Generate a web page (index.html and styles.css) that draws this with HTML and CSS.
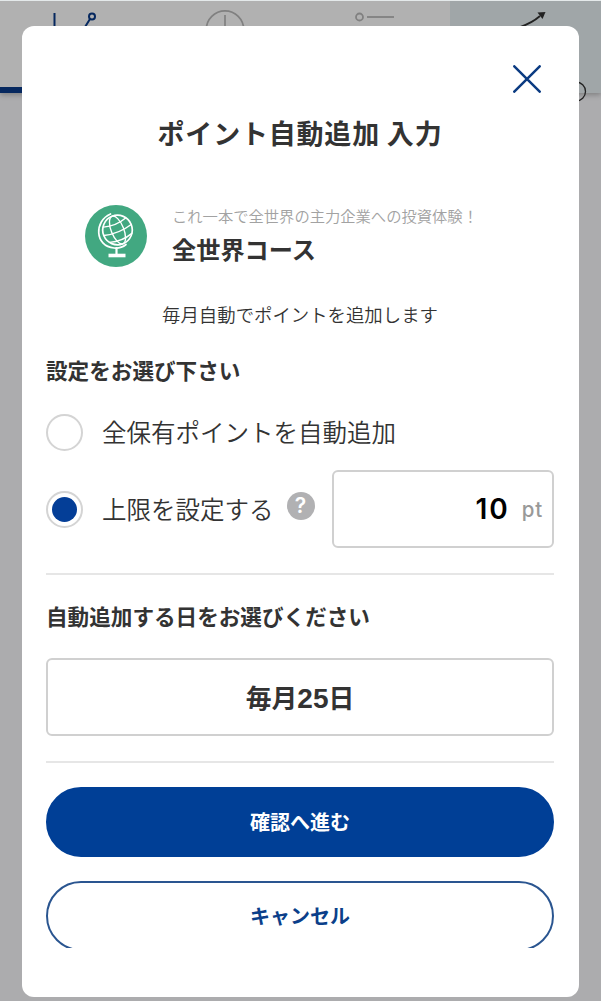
FILE: index.html
```html
<!DOCTYPE html>
<html lang="ja">
<head>
    <meta charset="UTF-8">
    <meta name="viewport" content="width=device-width, initial-scale=1.0">
    <title>ポイント自動追加 入力</title>
    <link rel="stylesheet" href="styles.css">
</head>
<body>
    <nav class="tabs">
        <div class="tab current">
            <svg class="tab-icon" viewBox="0 0 150 91" fill="none" stroke="#06285f" stroke-width="2">
                <path d="M54.5 12v30M85 26l5-8"/>
                <circle cx="92" cy="15.5" r="3"/>
            </svg>
        </div>
        <div class="tab">
            <svg class="tab-icon" viewBox="0 0 150 91" fill="none" stroke="#808080" stroke-width="1.7">
                <circle cx="75" cy="28.5" r="18.7"/>
                <path d="M75 14v16"/>
            </svg>
        </div>
        <div class="tab">
            <svg class="tab-icon" viewBox="0 0 150 91" fill="none" stroke="#808080" stroke-width="1.8">
                <circle cx="59.5" cy="16" r="3.5"/>
                <path d="M67 16h27"/>
            </svg>
        </div>
        <div class="tab active">
            <svg class="tab-icon" viewBox="0 0 150 91" fill="none" stroke="#222" stroke-width="1.8">
                <path d="M70 26q12-4 20-11"/>
                <path d="M87.500 11.500l8-.5-3 7z" fill="#222" stroke="none"/>
                <circle cx="126" cy="90.500" r="9.500" stroke-width="1.300"/>
            </svg>
        </div>
    </nav>

    <div class="modal">
        <div class="modal-scroll">
            <div class="close-row">
                <svg class="close" viewBox="0 0 28 28" stroke="#0b3b82" stroke-width="2.500" stroke-linecap="round">
                    <path d="M1.300 1.300l25.400 25.400M26.700 1.300L1.300 26.700"/>
                </svg>
            </div>
            <h1>ポイント自動追加 入力</h1>

            <div class="course">
                <svg class="course-icon" viewBox="0 0 62 62" fill="none" stroke="#fff" stroke-width="1.400" stroke-linecap="round">
                    <circle cx="31" cy="31" r="31" fill="#42a881" stroke="none"/>
                    <g transform="rotate(-22 32.500 25)">
                        <circle cx="32.500" cy="25" r="14.800" stroke-width="1.700"/>
                        <ellipse cx="32.500" cy="25" rx="6.300" ry="14.800"/>
                        <path d="M17.700 25q14.800 4 29.600 0M20.500 17q12 4 24 0M20.500 33.500q12 4 24 0"/>
                    </g>
                    <path d="M25.500 9C9 16 9.500 41 29 43Q36 43.700 41 39.500" stroke-width="1.700"/>
                    <path d="M31.500 43v6" stroke-width="2.200"/>
                    <path d="M23.500 50.500h17" stroke-width="3.600" stroke-linecap="butt"/>
                </svg>
                <div class="course-text">
                    <p class="caption">これ一本で全世界の主力企業への投資体験！</p>
                    <p class="course-name">全世界コース</p>
                </div>
            </div>
            <p class="note">毎月自動でポイントを追加します</p>

            <h2>設定をお選び下さい</h2>
            <div class="option all">
                <span class="radio"></span>
                <span class="label">全保有ポイントを自動追加</span>
            </div>
            <div class="option limit">
                <span class="radio checked"></span>
                <span class="label">上限を設定する</span>
                <span class="help">?</span>
                <div class="amount">
                    <span class="value">10</span>
                    <span class="unit">pt</span>
                </div>
            </div>

            <div class="divider"></div>
            <h2>自動追加する日をお選びください</h2>
            <div class="select">毎月<span class="day">25</span>日</div>
            <div class="divider"></div>

            <div class="btn primary">確認へ進む</div>
            <div class="btn secondary">キャンセル</div>
        </div>
    </div>
</body>
</html>
```

FILE: styles.css
```css
* {
    box-sizing: border-box;
}
body {
    margin: 0;
    height: 1001px;
    overflow: hidden;
    background: #acacae;
    color: #333;
    font-family: "Noto Sans CJK JP", sans-serif;
}
h1, h2, p {
    margin: 0;
}

/* tab bar behind the dialog */
.tabs {
    display: flex;
    height: 93px;
    border-top: 1px solid #e4e9ea;
    background: #b1b1b1;
    box-shadow: 0 2px 5px rgba(0, 0, 0, 0.25);
}
.tab {
    width: 150px;
}
.tab.current {
    border-bottom: 6px solid #06285f;
}
.tab.active {
    width: 151px;
    background: #a0a6a8;
}
.tab-icon {
    display: block;
    width: 150px;
    height: 91px;
    overflow: visible;
}

.modal {
    position: absolute;
    top: 26px;
    left: 22px;
    width: 557px;
    height: 971px;
    background: #fff;
    border-radius: 12px;
}
.modal-scroll {
    height: 922px;
    padding: 0 25px 0 24px;
    overflow: hidden;
}
.close-row {
    display: flex;
    justify-content: flex-end;
    padding: 39px 13px 0 0;
}
.close {
    width: 28px;
    height: 28px;
}
h1 {
    margin-top: 20px;
    font-size: 27px;
    font-weight: 700;
    line-height: 40px;
    letter-spacing: 0.8px;
    text-align: center;
}
h2 {
    margin-top: 27px;
    font-size: 21.6px;
    font-weight: 700;
    line-height: 30px;
}

.course {
    display: flex;
    gap: 25px;
    margin: 52px 0 0 39px;
    height: 62px;
}
.course-icon {
    width: 62px;
    height: 62px;
}
.caption {
    color: #a2a2a2;
    font-size: 15.3px;
    font-weight: 350;
    line-height: 20px;
    white-space: nowrap;
}
.course-name {
    margin-top: 9px;
    font-size: 24.2px;
    font-weight: 700;
    line-height: 30px;
}
.note {
    margin-top: 33px;
    font-size: 18.4px;
    font-weight: 350;
    line-height: 28px;
    text-align: center;
}

.option {
    display: flex;
    align-items: center;
}
.all {
    height: 38px;
    margin-top: 28px;
}
.limit {
    height: 78px;
    margin-top: 19px;
}
.radio {
    display: flex;
    width: 37px;
    height: 37px;
    margin-right: 19px;
    border: 2px solid #d4d4d4;
    border-radius: 50%;
}
.radio.checked::after {
    content: "";
    width: 25px;
    height: 25px;
    margin: auto;
    background: #043e97;
    border-radius: 50%;
}
.label {
    font-size: 24.5px;
    font-weight: 350;
    line-height: 36px;
    white-space: nowrap;
}
.help {
    width: 28px;
    height: 28px;
    margin: 0 0 7px 13px;
    border-radius: 50%;
    background: #b1b1b3;
    color: #fff;
    font: 600 21px/28px Inter, sans-serif;
    text-align: center;
}
.amount {
    display: flex;
    align-items: flex-start;
    justify-content: flex-end;
    width: 222px;
    height: 78px;
    margin-left: auto;
    padding-right: 9px;
    border: 2px solid #d0d0d0;
    border-radius: 6px;
    font-family: Inter, sans-serif;
}
.value {
    margin-right: 12px;
    color: #000;
    font-size: 28px;
    font-weight: 600;
    letter-spacing: 2px;
    line-height: 75px;
}
.unit {
    color: #999;
    font-size: 20.5px;
    font-weight: 500;
    letter-spacing: 0.8px;
    line-height: 76px;
}

.divider {
    height: 2px;
    margin-top: 25px;
    background: #e6e6e6;
}
.divider + h2 {
    margin-top: 26px;
}
.select {
    height: 78px;
    margin-top: 27px;
    border: 2px solid #d0d0d0;
    border-radius: 6px;
    font-size: 25.8px;
    font-weight: 700;
    line-height: 74px;
    text-align: center;
}
.day {
    font-family: "Liberation Sans", sans-serif;
    font-size: 28px;
}

.btn {
    height: 70px;
    margin-top: 24px;
    border: 2px solid #003f96;
    border-radius: 35px;
    font-size: 20px;
    font-weight: 700;
    line-height: 66px;
    text-align: center;
}
.primary {
    background: #003f96;
    color: #fff;
}
.secondary {
    border-color: #2a5590;
    color: #0b3f8a;
}
```
